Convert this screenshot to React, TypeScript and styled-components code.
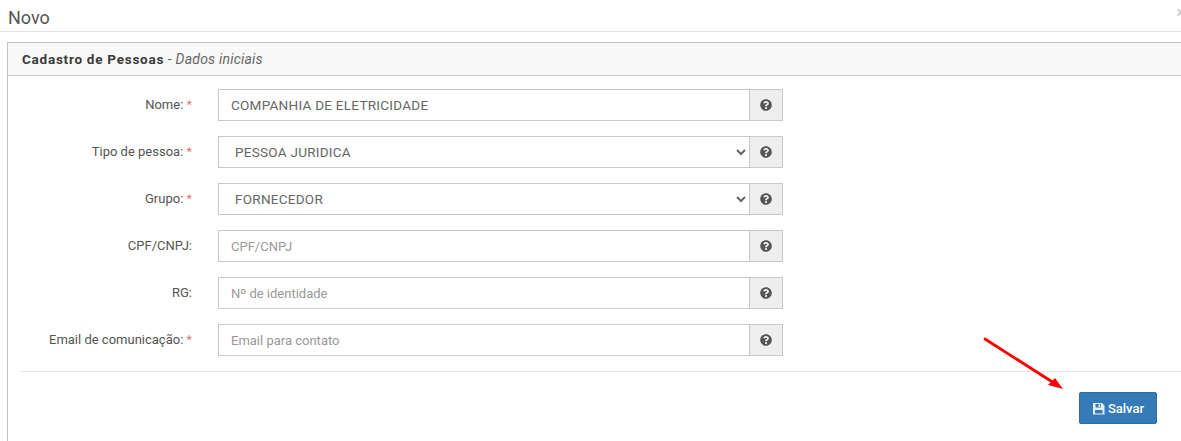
import React from 'react';
import styled, { createGlobalStyle } from 'styled-components';
import { FaQuestionCircle } from 'react-icons/fa';

const GlobalStyle = createGlobalStyle`
  html, body {
    margin: 0;
    height: 100%;
    overflow: hidden;
    background: #fff;
  }
  body {
    font-family: Roboto, "Liberation Sans", Arial, sans-serif;
    font-size: 13px;
    color: #555;
  }
`;

const Page = styled.div`
  position: relative;
  height: 441px;
  overflow: hidden;
`;

const Header = styled.div`
  height: 31px;
  padding-left: 8px;
  border-bottom: 1px solid #e5e5e5;
  font-size: 18px;
  line-height: 36px;
  color: #555;
`;

const Close = styled.span`
  position: absolute;
  top: 3px;
  right: -4px;
  font-size: 16px;
  line-height: 20px;
  color: #c4c4c4;
`;

const Panel = styled.section`
  margin: 10px -20px 0 7px;
  height: 420px;
  border: 1px solid #c2c2c2;
`;

const PanelHeading = styled.div`
  height: 32px;
  padding-left: 14px;
  background: #f9f9f9;
  border-bottom: 1px solid #c8c8c8;
  font-size: 14px;
  letter-spacing: 0.2px;
  line-height: 33px;
  color: #666;

  strong {
    font-size: 13.5px;
    font-weight: 700;
    letter-spacing: 0.75px;
    color: #3a3a3a;
  }
  em {
    font-style: italic;
  }
`;

const Form = styled.form`
  display: flex;
  flex-direction: column;
  gap: 15px;
  padding-top: 13px;
`;

const Row = styled.div`
  display: flex;
  height: 32px;
`;

const Label = styled.label`
  width: 184px;
  flex: none;
  text-align: right;
  font-size: 13px;
  line-height: 32px;
  color: #555;
`;

const Required = styled.span`
  color: #d9534f;
  font-weight: 300;
`;

const Group = styled.div`
  display: flex;
  width: 565px;
  margin-left: 26px;
`;

const TextInput = styled.input`
  flex: 1;
  min-width: 0;
  box-sizing: border-box;
  height: 32px;
  padding: 0 12px;
  border: 1px solid #c9c9c9;
  border-right: 0;
  outline: 0;
  background: #fff;
  font-family: inherit;
  font-size: 13.5px;
  letter-spacing: 0.27px;
  color: #666;

  &::placeholder {
    font-size: 13px;
    letter-spacing: 0;
    color: #999;
    opacity: 1;
  }
`;

const Select = styled.select`
  flex: 1;
  min-width: 0;
  box-sizing: border-box;
  height: 32px;
  padding: 0 12px;
  border: 1px solid #c9c9c9;
  border-right: 0;
  border-radius: 0;
  outline: 0;
  background: #fff;
  font-family: inherit;
  font-size: 13.5px;
  letter-spacing: 0.27px;
  color: #666;
`;

const Addon = styled.span`
  width: 34px;
  flex: none;
  box-sizing: border-box;
  display: flex;
  align-items: center;
  justify-content: center;
  border: 1px solid #c9c9c9;
  background: #eee;
  color: #555;
  font-size: 13px;
`;

const Divider = styled.hr`
  margin: 15px 0 0 13px;
  border: 0;
  border-top: 1px solid #e5e5e5;
`;

const Actions = styled.div`
  display: flex;
  padding: 20px 0 0 1071px;
`;

const SaveButton = styled.button`
  box-sizing: border-box;
  width: 78px;
  height: 32px;
  display: flex;
  align-items: center;
  justify-content: center;
  gap: 3px;
  border: 1px solid #2e6da4;
  border-radius: 2px;
  background: #337ab7;
  color: #fff;
  font-family: inherit;
  font-size: 13px;
  font-weight: 500;
`;

const Arrow = styled.svg`
  position: absolute;
  left: 980px;
  top: 334px;
`;

const FloppyIcon = () => (
  <svg width="13" height="13" viewBox="0 0 13 13" aria-hidden="true">
    <path
      fill="#fff"
      fillOpacity="0.88"
      fillRule="evenodd"
      d="M1 1H10L12.5 3.5V12.5H1ZM3.5 2V5.5H9V2ZM6.5 2.5H8.2V5H6.5ZM3 8V11.5H10.5V8Z"
    />
  </svg>
);

const HelpAddon = () => (
  <Addon>
    <FaQuestionCircle size={12} />
  </Addon>
);

const fields = [
  { label: 'Nome:', required: true, value: 'COMPANHIA DE ELETRICIDADE' },
  { label: 'Tipo de pessoa:', required: true, option: 'PESSOA JURIDICA' },
  { label: 'Grupo:', required: true, option: 'FORNECEDOR' },
  { label: 'CPF/CNPJ:', placeholder: 'CPF/CNPJ' },
  { label: 'RG:', placeholder: 'Nº de identidade' },
  { label: 'Email de comunicação:', required: true, placeholder: 'Email para contato' },
];

const App: React.FC = () => {
  return (
    <>
      <GlobalStyle />
      <Page>
        <Header>Novo</Header>
        <Close>×</Close>
        <Panel>
          <PanelHeading>
            <strong>Cadastro de Pessoas</strong> - <em>Dados iniciais</em>
          </PanelHeading>
          <Form>
            {fields.map((field) => (
              <Row key={field.label}>
                <Label>
                  {field.label}
                  {field.required ? <Required> *</Required> : null}
                </Label>
                <Group>
                  {field.option ? (
                    <Select defaultValue={field.option}>
                      <option>{field.option}</option>
                    </Select>
                  ) : (
                    <TextInput readOnly value={field.value} placeholder={field.placeholder} />
                  )}
                  <HelpAddon />
                </Group>
              </Row>
            ))}
          </Form>
          <Divider />
          <Actions>
            <SaveButton type="button">
              <FloppyIcon />
              Salvar
            </SaveButton>
          </Actions>
        </Panel>
        <Arrow width="90" height="62" viewBox="0 0 90 62">
          <line x1="5" y1="5" x2="74" y2="49" stroke="#f00" strokeWidth="2.8" strokeLinecap="round" />
          <polygon points="83,55 68,51 75,44" fill="#f00" />
        </Arrow>
      </Page>
    </>
  );
};

export default App;
